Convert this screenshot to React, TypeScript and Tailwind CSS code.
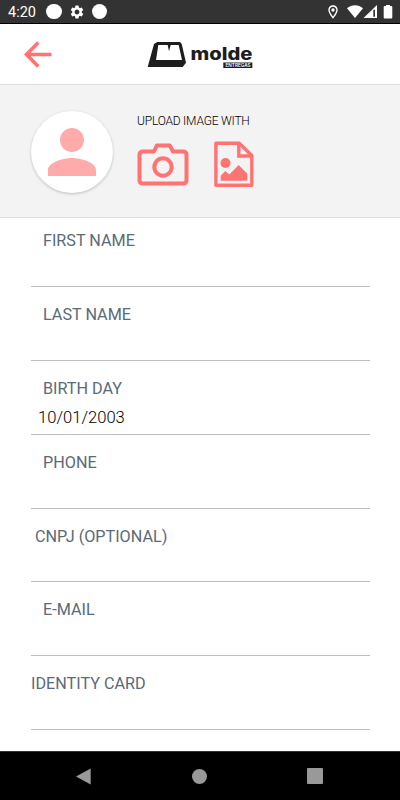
import React from 'react';
import { MdOutlineLocationOn, MdPerson, MdSettings } from 'react-icons/md';

type Field = {
  label: string;
  labelClass: string;
  value?: string;
};

const fields: Field[] = [
  { label: 'FIRST NAME', labelClass: 'pl-3' },
  { label: 'LAST NAME', labelClass: 'pl-3' },
  { label: 'BIRTH DAY', labelClass: 'pl-3', value: '10/01/2003' },
  { label: 'PHONE', labelClass: 'pl-3' },
  { label: 'CNPJ (OPTIONAL)', labelClass: 'pl-1' },
  { label: 'E-MAIL', labelClass: 'pl-3' },
  { label: 'IDENTITY CARD', labelClass: 'pl-0' },
];

function StatusBar() {
  return (
    <div className="flex h-6 shrink-0 items-center justify-between border-b border-black bg-[#333333] pl-2 pr-[7px] text-white">
      <div className="flex items-center">
        <span className="w-[38px] pt-0.5 text-[14.5px] leading-6">4:20</span>
        <span className="h-[15.5px] w-[15.5px] rounded-full bg-white" />
        <MdSettings className="mx-[7px]" size={16} />
        <span className="h-[15.5px] w-[15.5px] rounded-full bg-white" />
      </div>
      <div className="flex items-center">
        <MdOutlineLocationOn className="mr-1.5" size={16} />
        <svg width="46" height="14" viewBox="0 0 46 14" fill="currentColor">
          <path d="M0 3.3C4.6-.7 11.4-.7 16 3.3L8 13z" />
          <path d="M30 0v13H16.5z" />
          <path d="M26.3 4.7h1.7v7h-1.7z" fill="#333" />
          <path d="M39 1V0h4v1h1.4q.9 0 .9.9v10.7q0 .9-.9.9h-6.8q-.9 0-.9-.9V1.9q0-.9.9-.9z" />
        </svg>
      </div>
    </div>
  );
}

function Logo() {
  return (
    <svg width="108" height="30" viewBox="0 0 108 30" className="mt-px">
      <path
        fill="#1d1d1d"
        fillRule="evenodd"
        d="M1.7 27 8 4l3.3-2H34l1.7 2L40 22.7 36.7 27zM12.3 5 10 20h26L32.7 5h-8L23 11.3 21.7 5z"
      />
      <text
        x="44.5"
        y="19.5"
        fill="#1d1d1d"
        fontSize="17"
        fontWeight="800"
        textLength="62"
        lengthAdjust="spacingAndGlyphs"
        className="font-['Inter',sans-serif]"
      >
        molde
      </text>
      <path fill="#1d1d1d" d="M77.3 22.5h29V28h-29z" />
      <text
        x="79.5"
        y="27"
        fill="#fff"
        fontSize="5"
        fontWeight="600"
        textLength="25"
        lengthAdjust="spacingAndGlyphs"
        className="font-['Inter',sans-serif]"
      >
        ENTREGAS
      </text>
    </svg>
  );
}

function Header() {
  return (
    <header className="flex h-[60px] shrink-0 items-center bg-white pl-[23.5px]">
      <button aria-label="Back" className="mr-[94.5px]">
        <svg width="28" height="27" viewBox="0 0 28 27" fill="none" stroke="#ff7373" strokeWidth="3.5">
          <path d="M27.5 13.5H3M14.3 1.5 2.5 13.5l11.8 12" />
        </svg>
      </button>
      <Logo />
    </header>
  );
}

function CameraIcon() {
  return (
    <svg width="52" height="44" viewBox="0 0 52 44" fill="none" stroke="#ff7373" strokeWidth="4">
      <path
        strokeLinejoin="round"
        d="M6 8.5h11l2.8-6h13l3.2 6h10q3.5 0 3.5 3.5v25q0 3.5-3.5 3.5H6q-3.5 0-3.5-3.5V12q0-3.5 3.5-3.5z"
      />
      <circle cx="26" cy="24" r="8.7" />
    </svg>
  );
}

function ImageFileIcon() {
  return (
    <svg width="40" height="47" viewBox="0 0 40 47" fill="none" stroke="#ff7373" strokeWidth="3.4">
      <path strokeLinejoin="round" d="M1.9 2.2h23.3l12.6 12.3v29.8H1.9z" />
      <path d="M24.8 2.2V15h13" />
      <g fill="#ff7373" stroke="none">
        <circle cx="11.5" cy="22" r="5" />
        <path d="M6.7 39.7v-5l4.6-4.7 4 3.4 9.4-9.4 8.6 8.7v7z" />
      </g>
    </svg>
  );
}

function UploadSection() {
  return (
    <section className="flex h-[134px] shrink-0 border-y border-y-[#dedede] bg-[#f3f3f3] pl-[30.5px]">
      <div className="mt-[25.5px] flex h-[82px] w-[82px] items-center justify-center rounded-full bg-white shadow-[0_1px_3px_rgba(0,0,0,0.22)]">
        <MdPerson size={72} color="#ffabab" className="mt-px" />
      </div>
      <div className="ml-[24.5px] mt-7">
        <p className="text-[12px] leading-4 font-light tracking-[-0.2px] text-black">
          UPLOAD IMAGE WITH
        </p>
        <div className="mt-3 flex gap-[25px]">
          <button aria-label="Camera" className="mt-[2px] h-11">
            <CameraIcon />
          </button>
          <button aria-label="Gallery" className="h-[47px]">
            <ImageFileIcon />
          </button>
        </div>
      </div>
    </section>
  );
}

function FormField({ label, labelClass, value }: Field) {
  return (
    <div className="h-[73.9px] border-b border-[#bdbdbd] pt-[18px]">
      <label className={`block text-[16.2px] leading-5 text-[#5b6a77] ${labelClass}`}>{label}</label>
      {value && (
        <p className="mt-[9px] pl-[7px] text-[16.6px] leading-5 font-light text-black">{value}</p>
      )}
    </div>
  );
}

function NavigationBar() {
  return (
    <nav className="flex h-[49px] shrink-0 items-center justify-between border-t border-[#333] bg-black pl-[76px] pr-[77px]">
      <svg width="15" height="17" viewBox="0 0 15 17" fill="#999">
        <path d="M14.7.5v16L0 8.5z" />
      </svg>
      <span className="ml-px h-[15px] w-[15px] rounded-full bg-[#999999]" />
      <span className="h-4 w-4 rounded-[1px] bg-[#999999]" />
    </nav>
  );
}

export default function App() {
  return (
    <div className="flex h-[800px] w-[400px] flex-col overflow-hidden bg-white font-['Roboto',sans-serif]">
      <StatusBar />
      <Header />
      <UploadSection />
      <main className="-mt-[5px] min-h-0 flex-1 pl-[31px] pr-[30px]">
        {fields.map((field) => (
          <FormField key={field.label} {...field} />
        ))}
      </main>
      <NavigationBar />
    </div>
  );
}
